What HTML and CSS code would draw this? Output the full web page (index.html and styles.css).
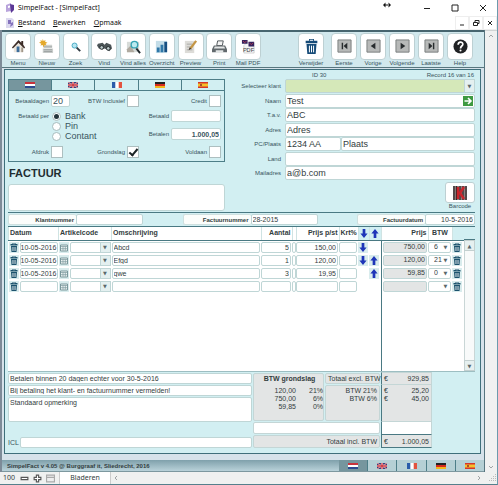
FILE: index.html
```html
<!DOCTYPE html>
<html lang="nl">
<head>
    <meta charset="UTF-8">
    <meta name="viewport" content="width=device-width, initial-scale=1.0">
    <title>SimpelFact - [SimpelFact]</title>
    <link rel="stylesheet" href="styles.css">
</head>
<body>
    <!-- Shared icons -->
    <svg class="sprite" aria-hidden="true">
        <symbol id="nl" viewBox="0 0 10 6"><path fill="#fff" d="M0 0h10v6H0z"/><path fill="#c8323c" d="M0 0h10v2H0z"/><path fill="#2c4a90" d="M0 4h10v2H0z"/></symbol>
        <symbol id="gb" viewBox="0 0 10 6"><path fill="#34447f" d="M0 0h10v6H0z"/><path stroke="#fff" stroke-width="1" d="M0 0l10 6M10 0L0 6"/><path stroke="#c8323c" stroke-width=".6" d="M0 0l10 6M10 0L0 6"/><path stroke="#fff" stroke-width="2" d="M5 0v6M0 3h10"/><path stroke="#c8323c" stroke-width="1.3" d="M5 0v6M0 3h10"/></symbol>
        <symbol id="fr" viewBox="0 0 10 6"><path fill="#fff" d="M0 0h10v6H0z"/><path fill="#2a5caa" d="M0 0h3.3v6H0z"/><path fill="#e2533f" d="M6.7 0H10v6H6.7z"/></symbol>
        <symbol id="de" viewBox="0 0 10 6"><path fill="#222" d="M0 0h10v2H0z"/><path fill="#d62a1e" d="M0 2h10v2H0z"/><path fill="#f2b51c" d="M0 4h10v2H0z"/></symbol>
        <symbol id="es" viewBox="0 0 10 6"><path fill="#d5352a" d="M0 0h10v6H0z"/><path fill="#f5c02a" d="M0 1.5h10v3H0z"/><path fill="#a8502a" d="M2 2h2v2H2z"/></symbol>
        <symbol id="trash" viewBox="0 0 16 18"><path fill="currentColor" d="M5 0h6v2h4v3H1V2h4zM2 6h12l-1 12H3z"/><path stroke="#fff" stroke-width="1.2" d="M5.500 8v8M8 8v8M10.500 8v8M6 1.500h4"/></symbol>
        <symbol id="cal" viewBox="0 0 8 8"><path fill="#eef4f4" stroke="#7b989c" d="M.5 1.500h7v6h-7z"/><path stroke="#7b989c" stroke-width=".7" d="M0 3h8M3 3v4M5.300 3v4M1 5.200h6"/></symbol>
        <symbol id="down" viewBox="0 0 8 10"><path fill="#1f35b8" d="M2.500 0h3v5H8L4 10 0 5h2.500z"/></symbol>
        <symbol id="up" viewBox="0 0 8 10"><path fill="#1f35b8" d="M2.500 10h3V5H8L4 0 0 5h2.500z"/></symbol>
    </svg>

    <div class="window">
        <header class="titlebar">
            <svg class="app-icon" viewBox="0 0 10 10"><path fill="#b9a4dc" d="M1 2l5-2v8L1 9z"/><path fill="#5b3796" d="M5 1l4 1v5l-3 3z"/><path fill="#fff" d="M3 3l2-.5v2L3 5z"/></svg>
            <span class="title">SimpelFact - [SimpelFact]</span>
            <svg class="resize" viewBox="0 0 8 6"><path fill="#111" d="M0 3l2.500-2.500v5zM8 3L5.500.5v5zM2 2.500h4v1H2z"/></svg>
            <div class="window-buttons">
                <button aria-label="Minimaliseren"><svg viewBox="0 0 8 8"><path d="M1 4.500h6"/></svg></button>
                <button aria-label="Maximaliseren"><svg viewBox="0 0 8 8"><path d="M1 1h6v6H1z"/></svg></button>
                <button aria-label="Sluiten"><svg viewBox="0 0 8 8"><path d="M1 1l6 6M7 1L1 7"/></svg></button>
            </div>
        </header>

        <nav class="menubar">
            <svg class="app-icon" viewBox="0 0 10 10"><path fill="#dcd9ef" d="M1 0h6l2 2v8H1z"/><path fill="#8573bd" d="M3 2h3v4H3zM6 5l2-1v3L5 9z"/></svg>
            <a href="#"><u>B</u>estand</a>
            <a href="#"><u>B</u>ewerken</a>
            <a href="#"><u>O</u>pmaak</a>
            <div class="doc-buttons">
                <button aria-label="Venster minimaliseren"><svg viewBox="0 0 8 8"><path d="M2 6h4"/></svg></button>
                <button aria-label="Venster herstellen"><svg viewBox="0 0 8 8"><path d="M1.500 3.500h4v3h-4zM3 3V1.500h4v3H6"/></svg></button>
                <button aria-label="Venster sluiten"><svg viewBox="0 0 8 8"><path d="M2 2l4 4M6 2L2 6"/></svg></button>
            </div>
        </nav>

        <div class="workspace">
            <div class="content">
                <div class="toolbar">
                    <div class="tools tools-left">
                        <button class="tool"><span class="tile"><svg viewBox="0 0 16 16"><path fill="#e9e4dc" d="M3 8l5-5 5 5v6H3z"/><path fill="#3b2b26" d="M1 9l7-8 3 3V2h2v4l2 3-1 1-6-6-6 6z"/><path fill="#3c6d9b" d="M6 8h3v6H6z"/><path fill="#a19688" d="M11 9h2v5h-2z"/></svg></span>Menu</button>
                        <button class="tool"><span class="tile"><svg viewBox="0 0 16 16"><path fill="#cdd1cf" d="M5 6h9v3H5zM4 10h11v5H4z"/><path stroke="#949b9b" d="M5 8.500h9M5 11.500h9M5 13.500h9"/><path fill="#e4a92c" d="M4 0l1 2 2-1-.5 2L9 4 7 5l1 2-2-.5L4.500 9 4 6.500 1.500 7l1-2L0 4l2-1-.5-2L3.500 2z"/></svg></span>Nieuw</button>
                        <button class="tool"><span class="tile"><svg viewBox="0 0 16 16"><path stroke="#303b42" stroke-width="2" d="M9 9l4 4"/><circle cx="7" cy="7" r="2.700" fill="#b6e6f2" stroke="#45a8c2"/></svg></span>Zoek</button>
                        <button class="tool"><span class="tile"><svg viewBox="0 0 16 16"><path fill="#4c5558" d="M1 5l5-1 2 2 2-2 5 2 1 4-3 3-3-2-2-1-2 1-4-1-2-3z"/><circle cx="5" cy="9" r="2" fill="#bac8c9" stroke="#20282a"/><circle cx="12" cy="10" r="2" fill="#bac8c9" stroke="#20282a"/></svg></span>Vind</button>
                        <button class="tool"><span class="tile"><svg viewBox="0 0 16 16"><path fill="#d7dbd8" d="M1 3h13v11H1z"/><path fill="#b0aaa0" d="M1 11l4-4 4 7H1z"/><path stroke="#20282c" stroke-width="2" d="M11 10l4 5"/><circle cx="9" cy="6" r="3.500" fill="#bceaf0" stroke="#36a3b4" stroke-width="1.500"/></svg></span>Vind alles</button>
                        <button class="tool"><span class="tile"><svg viewBox="0 0 16 16"><path fill="#c4dde8" d="M2 2h12v13H2z"/><path fill="#2f77a8" d="M3 9h3v5H3zM7 6h3v8H7z"/><path fill="#164e81" d="M11 3h3v11h-3z"/></svg></span>Overzicht</button>
                        <button class="tool"><span class="tile"><svg viewBox="0 0 16 16"><path fill="#dddcd8" d="M2 2h10v13H2z"/><path stroke="#a8a8a4" d="M4 5.500h6M4 8.500h6M4 11.500h6"/><path stroke="#c49645" stroke-width="2.500" d="M14 2l-6 8"/><path fill="#3f352b" d="M7 9l2 1-3 2z"/></svg></span>Preview</button>
                        <button class="tool"><span class="tile"><svg viewBox="0 0 16 16"><path fill="#f4f4f4" stroke="#4c5256" d="M5 7l1-5h6l-1 5z"/><path fill="#62696d" d="M2 7h12l2 4v3H0v-3z"/><path fill="#e3e6e6" d="M3 8h10l1 2H2zM4 12h8v3H4z"/></svg></span>Print</button>
                        <button class="tool"><span class="tile"><svg viewBox="0 0 16 16"><path fill="#f3f3f3" stroke="#b8b8b8" stroke-width=".6" d="M6 4h8v11H3V7z"/><path fill="#33235d" d="M1 1h6v4H1zM8 3h6v5H8z"/><path fill="none" stroke="#b13a54" d="M2 2l2 2 2-2M9 4l2 2 2-2"/><text x="2" y="14" class="pdf">PDF</text></svg></span>Mail PDF</button>
                    </div>
                    <div class="tools tools-right">
                        <button class="tool tool-delete"><span class="tile"><svg viewBox="0 0 16 18"><path fill="#164b78" d="M5 0h6v2h4v3H1V2h4zM2 6h12l-1 12H3z"/><path stroke="#fff" stroke-width="1.200" d="M5.500 8v8M8 8v8M10.500 8v8M6 1.500h4"/></svg></span>Verwijder</button>
                        <button class="tool"><span class="tile"><svg viewBox="0 0 16 16"><path fill="#b7b9b8" stroke="#777c7c" d="M1 1h14v13H1z"/><path fill="#282c2e" d="M5 4h1.500v7H5zM11 4v7L7 7.500z"/></svg></span>Eerste</button>
                        <button class="tool"><span class="tile"><svg viewBox="0 0 16 16"><path fill="#b7b9b8" stroke="#777c7c" d="M1 1h14v13H1z"/><path fill="#282c2e" d="M10 4v7L5 7.500z"/></svg></span>Vorige</button>
                        <button class="tool"><span class="tile"><svg viewBox="0 0 16 16"><path fill="#b7b9b8" stroke="#777c7c" d="M1 1h14v13H1z"/><path fill="#282c2e" d="M6 4v7l5-3.500z"/></svg></span>Volgende</button>
                        <button class="tool"><span class="tile"><svg viewBox="0 0 16 16"><path fill="#b7b9b8" stroke="#777c7c" d="M1 1h14v13H1z"/><path fill="#282c2e" d="M5 4v7l4-3.500zM9.500 4H11v7H9.500z"/></svg></span>Laatste</button>
                        <button class="tool"><span class="tile"><svg viewBox="0 0 16 16"><circle cx="8" cy="8" r="7.500" fill="#202224"/><path fill="none" stroke="#fff" stroke-width="1.800" d="M5.500 6c0-3.500 5-3.500 5-.5C10.500 7.500 8 7.500 8 10"/><circle cx="8" cy="12.300" r="1.100" fill="#fff"/></svg></span>Help</button>
                    </div>
                </div>

                <main class="invoice">
                    <div class="top">
                        <section class="top-left">
                            <div class="payment">
                                <div class="langs">
                                    <button class="active" aria-label="Nederlands"><svg><use href="#nl"/></svg></button>
                                    <button aria-label="Engels"><svg><use href="#gb"/></svg></button>
                                    <button aria-label="Frans"><svg><use href="#fr"/></svg></button>
                                    <button aria-label="Duits"><svg><use href="#de"/></svg></button>
                                    <button aria-label="Spaans"><svg><use href="#es"/></svg></button>
                                </div>
                                <div class="pay-grid">
                                    <label for="dagen">Betaaldagen</label>
                                    <input id="dagen" class="field days" value="20">
                                    <label for="incl">BTW Inclusief</label>
                                    <input id="incl" type="checkbox">
                                    <label for="credit">Credit</label>
                                    <input id="credit" class="last" type="checkbox">
                                </div>
                                <div class="pay-middle">
                                    <span class="pay-label" id="per">Betaald per</span>
                                    <div class="radios" role="radiogroup" aria-labelledby="per">
                                        <label><input type="radio" name="per" checked>Bank</label>
                                        <label><input type="radio" name="per">Pin</label>
                                        <label><input type="radio" name="per">Contant</label>
                                    </div>
                                    <div class="amounts">
                                        <label for="betaald">Betaald</label>
                                        <input id="betaald" class="field amount">
                                        <label for="betalen">Betalen</label>
                                        <input id="betalen" class="field amount" value="1.000,05">
                                    </div>
                                </div>
                                <div class="pay-grid">
                                    <label for="afdruk">Afdruk</label>
                                    <input id="afdruk" type="checkbox">
                                    <label for="grondslag">Grondslag</label>
                                    <input id="grondslag" type="checkbox" checked>
                                    <label for="voldaan">Voldaan</label>
                                    <input id="voldaan" class="last" type="checkbox">
                                </div>
                            </div>
                            <h1>FACTUUR</h1>
                            <textarea class="field note" aria-label="Factuurtekst"></textarea>
                        </section>

                        <section class="customer">
                            <div class="record"><span>ID 30</span><span>Record 16 van 16</span></div>
                            <div class="customer-grid">
                                <label for="klant">Selecteer klant</label>
                                <div class="drop drop-green"><select id="klant" class="field"><option></option></select></div>
                                <label for="naam">Naam</label>
                                <div class="name">
                                    <input id="naam" class="field" value="Test">
                                    <button class="go" aria-label="Ga naar klant"><svg viewBox="0 0 10 10"><path fill="none" stroke="#fff" stroke-width="1.600" d="M1.500 5H8M5 2l3 3-3 3"/></svg></button>
                                </div>
                                <label for="tav">T.a.v.</label>
                                <input id="tav" class="field" value="ABC">
                                <label for="adres">Adres</label>
                                <input id="adres" class="field" value="Adres">
                                <label for="pc">PC/Plaats</label>
                                <div class="city">
                                    <input id="pc" class="field" value="1234 AA">
                                    <input class="field" aria-label="Plaats" value="Plaats">
                                </div>
                                <label for="land">Land</label>
                                <input id="land" class="field">
                                <label for="mail">Mailadres</label>
                                <input id="mail" class="field" value="a@b.com">
                            </div>
                            <button class="barcode"><span><svg viewBox="0 0 14 14"><path fill="#8d8583" d="M0 0h14v14H0z"/><path stroke="#2c2426" stroke-width="1.200" d="M1 0v14M3.500 0v14M7 0v14M10 0v14M13 0v14"/><path fill="none" stroke="#c9252c" stroke-width="2.500" d="M5 1v12M11 1L7 7l4 6"/></svg></span>Barcode</button>
                        </section>
                    </div>

                    <div class="numbers">
                        <div class="number"><label for="klantnr">Klantnummer</label><input id="klantnr" class="field"></div>
                        <div class="number"><label for="factuurnr">Factuurnummer</label><input id="factuurnr" class="field" value="28-2015"></div>
                        <div class="number number-date"><label for="datum">Factuurdatum</label><input id="datum" class="field right" value="10-5-2016"></div>
                    </div>

                    <div class="lines">
                        <div class="lines-main">
                            <table>
                                <colgroup>
                                    <col class="w11"><col class="w39"><col class="w11"><col class="w42"><col>
                                    <col class="w31"><col class="w4"><col class="w43"><col class="w19"><col class="w11"><col class="w12">
                                    <col class="w47"><col class="w24"><col class="w12">
                                </colgroup>
                                <thead>
                                    <tr>
                                        <th colspan="2">Datum</th><th colspan="2">Artikelcode</th><th>Omschrijving</th>
                                        <th class="right">Aantal</th><th></th><th class="right">Prijs p/st</th><th class="right">Krt%</th>
                                        <th class="sort"><svg><use href="#down"/></svg></th><th class="sort"><svg><use href="#up"/></svg></th>
                                        <th class="right">Prijs</th><th class="center">BTW</th><th class="blank"></th>
                                    </tr>
                                </thead>
                                <tbody>
                                    <tr>
                                        <td><button class="icon" aria-label="Verwijder regel"><svg><use href="#trash"/></svg></button></td>
                                        <td><input class="field date" aria-label="Datum" value="10-05-2016"></td>
                                        <td><button class="icon" aria-label="Kalender"><svg><use href="#cal"/></svg></button></td>
                                        <td><div class="drop"><select class="field" aria-label="Artikelcode"><option></option></select></div></td>
                                        <td><input class="field" aria-label="Omschrijving" value="Abcd"></td>
                                        <td><input class="field right" aria-label="Aantal" value="5"></td>
                                        <td><span class="field"></span></td>
                                        <td><input class="field right" aria-label="Prijs per stuk" value="150,00"></td>
                                        <td><input class="field" aria-label="Korting"></td>
                                        <td><button class="icon" aria-label="Omlaag"><svg><use href="#down"/></svg></button></td>
                                        <td></td>
                                        <td class="price"><output class="field right">750,00</output></td>
                                        <td><div class="drop drop-btw"><select class="field" aria-label="BTW"><option>6</option></select></div></td>
                                        <td><button class="icon" aria-label="Verwijder regel"><svg><use href="#trash"/></svg></button></td>
                                    </tr>
                                    <tr>
                                        <td><button class="icon" aria-label="Verwijder regel"><svg><use href="#trash"/></svg></button></td>
                                        <td><input class="field date" aria-label="Datum" value="10-05-2016"></td>
                                        <td><button class="icon" aria-label="Kalender"><svg><use href="#cal"/></svg></button></td>
                                        <td><div class="drop"><select class="field" aria-label="Artikelcode"><option></option></select></div></td>
                                        <td><input class="field" aria-label="Omschrijving" value="Efgd"></td>
                                        <td><input class="field right" aria-label="Aantal" value="1"></td>
                                        <td><span class="field"></span></td>
                                        <td><input class="field right" aria-label="Prijs per stuk" value="120,00"></td>
                                        <td><input class="field" aria-label="Korting"></td>
                                        <td><button class="icon" aria-label="Omlaag"><svg><use href="#down"/></svg></button></td>
                                        <td><button class="icon" aria-label="Omhoog"><svg><use href="#up"/></svg></button></td>
                                        <td class="price"><output class="field right">120,00</output></td>
                                        <td><div class="drop drop-btw"><select class="field" aria-label="BTW"><option>21</option></select></div></td>
                                        <td><button class="icon" aria-label="Verwijder regel"><svg><use href="#trash"/></svg></button></td>
                                    </tr>
                                    <tr>
                                        <td><button class="icon" aria-label="Verwijder regel"><svg><use href="#trash"/></svg></button></td>
                                        <td><input class="field date" aria-label="Datum" value="10-05-2016"></td>
                                        <td><button class="icon" aria-label="Kalender"><svg><use href="#cal"/></svg></button></td>
                                        <td><div class="drop"><select class="field" aria-label="Artikelcode"><option></option></select></div></td>
                                        <td><input class="field" aria-label="Omschrijving" value="qwe"></td>
                                        <td><input class="field right" aria-label="Aantal" value="3"></td>
                                        <td><span class="field"></span></td>
                                        <td><input class="field right" aria-label="Prijs per stuk" value="19,95"></td>
                                        <td><input class="field" aria-label="Korting"></td>
                                        <td></td>
                                        <td><button class="icon" aria-label="Omhoog"><svg><use href="#up"/></svg></button></td>
                                        <td class="price"><output class="field right">59,85</output></td>
                                        <td><div class="drop drop-btw"><select class="field" aria-label="BTW"><option>0</option></select></div></td>
                                        <td><button class="icon" aria-label="Verwijder regel"><svg><use href="#trash"/></svg></button></td>
                                    </tr>
                                    <tr>
                                        <td><button class="icon" aria-label="Verwijder regel"><svg><use href="#trash"/></svg></button></td>
                                        <td><input class="field date" aria-label="Datum"></td>
                                        <td><button class="icon" aria-label="Kalender"><svg><use href="#cal"/></svg></button></td>
                                        <td><div class="drop"><select class="field" aria-label="Artikelcode"><option></option></select></div></td>
                                        <td><input class="field" aria-label="Omschrijving"></td>
                                        <td><input class="field" aria-label="Aantal"></td>
                                        <td><span class="field"></span></td>
                                        <td><input class="field" aria-label="Prijs per stuk"></td>
                                        <td><input class="field" aria-label="Korting"></td>
                                        <td></td>
                                        <td></td>
                                        <td class="price"><output class="field"></output></td>
                                        <td><div class="drop drop-btw"><select class="field" aria-label="BTW"><option></option></select></div></td>
                                        <td><button class="icon" aria-label="Verwijder regel"><svg><use href="#trash"/></svg></button></td>
                                    </tr>
                                </tbody>
                            </table>
                            <div class="lines-rest"><div></div></div>
                        </div>
                        <div class="scroll">
                            <div class="scroll-head"></div>
                            <button aria-label="Omhoog schuiven">▲</button>
                            <div class="track"></div>
                            <button aria-label="Omlaag schuiven">▼</button>
                        </div>
                    </div>

                    <div class="bottom">
                        <div class="notes">
                            <input class="field" aria-label="Betalingstermijn" value="Betalen binnen 20 dagen echter voor 30-5-2016">
                            <input class="field" aria-label="Betalingstekst" value="Bij betaling het klant- en factuurnummer vermelden!">
                            <textarea class="field" aria-label="Opmerking">Standaard opmerking</textarea>
                            <div class="icl"><label for="icl">ICL</label><input id="icl" class="field"></div>
                        </div>
                        <div class="totals">
                            <div class="base">
                                <strong>BTW grondslag</strong>
                                <span>120,00</span><span>21%</span>
                                <span>750,00</span><span>6%</span>
                                <span>59,85</span><span>0%</span>
                            </div>
                            <div class="gray">Totaal excl. BTW</div>
                            <div class="gray money"><span>€</span><span>929,85</span></div>
                            <div class="gray vat">BTW 21%<br>BTW 6%</div>
                            <div class="gray money vat"><span>€<br>€</span><span>25,20<br>45,00</span></div>
                            <div class="gray white wide"></div>
                            <div class="gray white money"></div>
                            <div class="gray wide total">Totaal incl. BTW</div>
                            <div class="gray money total-sum"><span>€</span><span>1.000,05</span></div>
                        </div>
                    </div>
                </main>

                <footer class="footer">
                    <strong>SimpelFact v 4.05 @ Burggraaf it, Sliedrecht, 2016</strong>
                    <div class="langs">
                        <button class="active" aria-label="Nederlands"><svg><use href="#nl"/></svg></button>
                        <button aria-label="Engels"><svg><use href="#gb"/></svg></button>
                        <button aria-label="Frans"><svg><use href="#fr"/></svg></button>
                        <button aria-label="Duits"><svg><use href="#de"/></svg></button>
                        <button aria-label="Spaans"><svg><use href="#es"/></svg></button>
                    </div>
                </footer>
            </div>
            <div class="side-scroll">
                <svg viewBox="0 0 8 8"><path d="M2 5l2-2 2 2"/></svg>
                <svg viewBox="0 0 8 8"><path d="M2 3l2 2 2-2"/></svg>
            </div>
        </div>

        <div class="statusbar">
            <span class="zoom">100</span>
            <button aria-label="Uitzoomen"><svg viewBox="0 0 8 8"><path fill="#fff" stroke="#555" d="M1 3h6v2H1z"/></svg></button>
            <button aria-label="Inzoomen"><svg viewBox="0 0 8 8"><path fill="#fff" stroke="#555" d="M3 1h2v2h2v2H5v2H3V5H1V3h2z"/></svg></button>
            <button aria-label="Statusbalk"><svg viewBox="0 0 8 8"><path fill="#eee" stroke="#aaa" d="M.5 1h7v6h-7zM.5 3h7"/></svg></button>
            <span class="mode">Bladeren</span>
            <svg class="chevron" viewBox="0 0 8 8"><path d="M5 2L3 4l2 2"/></svg>
            <svg class="chevron chevron-right" viewBox="0 0 8 8"><path d="M3 2l2 2-2 2"/></svg>
            <svg class="grip" viewBox="0 0 8 8"><path fill="#bbb" d="M6 0h1v1H6zM4 2h1v1H4zM6 2h1v1H6zM2 4h1v1H2zM4 4h1v1H4zM6 4h1v1H6zM0 6h1v1H0zM2 6h1v1H2zM4 6h1v1H4zM6 6h1v1H6z"/></svg>
        </div>
    </div>
</body>
</html>
```
FILE: styles.css
```css
*, *::after {
    box-sizing: border-box;
}
body {
    margin: 0;
    font-family: "Liberation Sans", Arial, sans-serif;
    font-size: 7px;
    line-height: 8px;
    color: #333d40;
    background-color: #fff;
}
button, input, select, textarea {
    font: inherit;
    color: inherit;
    margin: 0;
    padding: 0;
    border: none;
    background: none;
    min-width: 0;
}
svg {
    display: block;
}
.sprite {
    position: absolute;
    width: 0;
    height: 0;
}
.window {
    display: flex;
    flex-direction: column;
    min-height: 100vh;
    border-right: 1px solid #6c9aad;
    border-bottom: 1px solid #55808c;
}

/* Title and menu */
.titlebar, .menubar {
    display: flex;
    align-items: center;
    height: 15px;
    padding-left: 5px;
    font-family: "Noto Sans", "Open Sans", sans-serif;
    font-size: 7px;
    color: #111;
}
.app-icon {
    width: 10px;
    height: 10px;
    margin-right: 3px;
}
.resize {
    width: 8px;
    height: 6px;
    margin-left: auto;
    margin-bottom: 5px;
}
.window-buttons {
    display: flex;
    gap: 20px;
    margin-left: 32px;
    padding-right: 10px;
}
.window-buttons svg, .doc-buttons svg {
    width: 8px;
    height: 8px;
    fill: none;
    stroke: #222;
    stroke-width: 1;
}
.menubar a {
    color: #111;
    text-decoration: none;
    margin-right: 8px;
}
.doc-buttons {
    display: flex;
    margin-left: auto;
}
.doc-buttons button {
    padding: 2px;
    border: 1px solid #eee;
}

/* Workspace */
.workspace {
    display: flex;
    flex: 1;
}
.content {
    display: flex;
    flex-direction: column;
    flex: 1;
    border-left: 2px solid #7d8b98;
    border-right: 1px solid #56757f;
    background-color: #d6e2ea;
}
.side-scroll {
    display: flex;
    flex-direction: column;
    justify-content: space-between;
    align-items: center;
    width: 12px;
    background-color: #f0f1f1;
    border-top: 1px solid #d0d4d4;
}
.side-scroll svg, .chevron {
    width: 8px;
    height: 8px;
    margin: 1px;
    fill: none;
    stroke: #a0a4a6;
}
.toolbar {
    display: flex;
    justify-content: space-between;
    height: 38px;
    padding: 1px 11px 0 3px;
    border-top: 2px solid #47656f;
    border-bottom: 1px solid #58767f;
    background-color: #d1e8ed;
}
.tools {
    display: flex;
    justify-content: space-between;
}
.tools-left {
    width: 256px;
}
.tools-right {
    width: 175px;
}
.tool {
    display: flex;
    flex-direction: column;
    align-items: center;
    width: 26px;
    font-size: 6px;
    line-height: 7px;
    white-space: nowrap;
    color: #38545d;
}
.tool-delete {
    margin-right: 4px;
}
.tile {
    display: flex;
    align-items: center;
    justify-content: center;
    width: 26px;
    height: 27px;
    border: 1px solid #bdd0d3;
    border-radius: 4px;
    background-color: #fff;
}
.tile svg {
    width: 15px;
    height: 15px;
}
.pdf {
    font-size: 6px;
    fill: #444;
}
.invoice {
    display: flex;
    flex-direction: column;
    flex: 1;
    margin: 1px 3px 6px 2px;
    padding: 0 5px 5px 3px;
    border: 1px solid #3f6f7b;
    background-color: #d2eff2;
}

/* Fields */
.field {
    display: block;
    width: 100%;
    height: 11px;
    padding: 0 1px;
    border: 1px solid #bfd6d6;
    border-radius: 2px;
    background-color: #fff;
}
textarea.field {
    resize: none;
    overflow: hidden;
}
.right {
    text-align: right;
}
.center {
    text-align: center;
}
input[type="checkbox"] {
    appearance: none;
    width: 12px;
    height: 12px;
    border: 1px solid #adbfc0;
    background-color: #fff;
}
input[type="checkbox"]:checked::after {
    content: "";
    display: block;
    width: 5px;
    height: 9px;
    margin-left: 3px;
    border: solid #1b2426;
    border-width: 0 2px 2px 0;
    transform: rotate(40deg);
}
input[type="radio"] {
    appearance: none;
    width: 9px;
    height: 9px;
    border: 1px solid #a6bcbe;
    border-radius: 50%;
    background-color: #fff;
}
input[type="radio"]:checked {
    border: 2px solid #fff;
    outline: 1px solid #a6bcbe;
    outline-offset: -1px;
    background-color: #26363c;
}
.drop {
    position: relative;
}
.drop select {
    appearance: none;
}
.drop::after {
    content: "▼";
    position: absolute;
    top: 0;
    right: 0;
    width: 11px;
    height: 100%;
    display: flex;
    align-items: center;
    justify-content: center;
    border: 1px solid #bfd6d6;
    background-color: #e4f0f0;
    font-family: "DejaVu Sans", sans-serif;
    font-size: 5px;
    color: #5a686b;
    pointer-events: none;
}

/* Upper half */
.top {
    display: flex;
    justify-content: space-between;
}
.top-left {
    width: 217px;
    padding-top: 9px;
}
.payment {
    border: 1px solid #4d7e88;
    font-size: 6px;
    color: #38545d;
}
.langs {
    display: flex;
}
.langs button {
    display: flex;
    flex: 1;
    align-items: center;
    justify-content: center;
    height: 10px;
    border-right: 1px solid #4d7e88;
}
.langs button:last-child {
    border-right: none;
}
.langs .active {
    background-color: #76969e;
}
.langs svg {
    width: 10px;
    height: 6px;
}
.payment .langs {
    border-bottom: 1px solid #4d7e88;
}
.pay-grid {
    display: grid;
    grid-template-columns: 40px 19px 53px 12px 1fr 12px;
    column-gap: 2px;
    align-items: center;
    padding: 4px 3px 3px 0;
    text-align: right;
}
.pay-grid .days {
    height: 12px;
    font-size: 9px;
}
.pay-middle {
    display: flex;
    height: 32px;
    padding-right: 3px;
}
.pay-label {
    width: 40px;
    padding-top: 2px;
    text-align: right;
}
.radios {
    display: flex;
    flex-direction: column;
    margin-left: 3px;
    padding-top: 1px;
    font-size: 9px;
    line-height: 10px;
}
.radios label {
    display: flex;
    align-items: center;
    gap: 4px;
    height: 10px;
}
.amounts {
    display: grid;
    grid-template-columns: auto 50px;
    gap: 6px 2px;
    align-content: start;
    align-items: center;
    margin-left: auto;
    text-align: right;
}
.amount {
    height: 12px;
    text-align: right;
    font-size: 7px;
    font-weight: bold;
}
h1 {
    margin: 5px 0 5px 1px;
    font-size: 11px;
    line-height: 12px;
    color: #1f2d31;
}
.top .note {
    height: 27px;
    border-radius: 3px;
}
.customer {
    display: flex;
    flex-direction: column;
    width: 236px;
    font-size: 6px;
    color: #38545d;
}
.record {
    display: flex;
    justify-content: space-between;
    padding: 1px 1px 0 73px;
}
.customer-grid {
    display: grid;
    grid-template-columns: 42px 1fr;
    column-gap: 4px;
    align-content: space-between;
    align-items: center;
    height: 101px;
    text-align: right;
    white-space: nowrap;
}
.customer-grid .field {
    height: 14px;
    font-size: 9px;
    color: #333d40;
}
.customer-grid .drop-green .field {
    background-color: #d5e8b9;
}
.customer-grid .name {
    position: relative;
}
.go {
    position: absolute;
    top: 2px;
    right: 2px;
    width: 10px;
    height: 10px;
    background-color: #3e9a41;
}
.city {
    display: grid;
    grid-template-columns: 56px 1fr;
}
.barcode {
    display: flex;
    flex-direction: column;
    align-items: center;
    align-self: flex-end;
    margin-top: 2px;
    line-height: 7px;
}
.barcode span {
    display: flex;
    align-items: center;
    justify-content: center;
    width: 30px;
    height: 21px;
    border: 1px solid #bdd0d3;
    border-radius: 3px;
    background-color: #fff;
}
.barcode svg {
    width: 14px;
    height: 14px;
}

/* Customer and invoice numbers */
.numbers {
    display: flex;
    justify-content: space-between;
    margin-top: 1px;
    padding: 1px 0;
    border-top: 1px solid #4a7983;
    border-bottom: 1px solid #4a7983;
}
.number {
    display: grid;
    grid-template-columns: 68px 67px;
}
.number-date {
    grid-template-columns: 68px 50px;
}
.number label {
    padding: 1px 2px 0 0;
    border: 1px solid #cfe0df;
    border-right: none;
    border-radius: 2px;
    background-color: #fbfdfb;
    text-align: right;
    font-size: 6px;
    font-weight: bold;
}

/* Invoice lines */
.lines {
    display: flex;
    flex: 1;
}
.lines-main {
    display: flex;
    flex-direction: column;
    flex: 1;
}
table {
    width: 100%;
    table-layout: fixed;
    border-collapse: collapse;
    background-color: #fff;
}
.w4 { width: 4px; }
.w11 { width: 11px; }
.w12 { width: 12px; }
.w19 { width: 19px; }
.w24 { width: 24px; }
.w31 { width: 31px; }
.w39 { width: 39px; }
.w42 { width: 42px; }
.w43 { width: 43px; }
.w47 { width: 47px; }
th {
    height: 13px;
    padding: 0 1px;
    border-bottom: 1px solid #4a7983;
    border-left: 1px solid #cfe3e3;
    text-align: left;
    white-space: nowrap;
}
th.right {
    text-align: right;
}
th.center {
    text-align: center;
}
th.blank, th.sort {
    background-color: #d2eff2;
}
.sort svg {
    width: 8px;
    height: 9px;
}
td {
    height: 13px;
    padding: 1px 1px 1px 0;
}
.date {
    padding: 0;
}
td.price {
    padding-left: 1px;
    border-left: 1px solid #4a7983;
}
td.price .field {
    background-color: #e3e5e5;
}
.drop-btw::after {
    border: none;
    background: none;
}
.drop-btw .field {
    padding-left: 5px;
}
.icon {
    display: flex;
    align-items: center;
    justify-content: center;
    width: 10px;
    height: 11px;
    background-color: #d9eced;
    color: #1c526d;
}
.icon svg {
    width: 8px;
    height: 9px;
}
.lines-rest {
    display: flex;
    flex: 1;
    justify-content: flex-end;
    background-color: #fff;
}
.lines-rest div {
    width: 83px;
    border-left: 1px solid #4a7983;
}
.scroll {
    display: flex;
    flex-direction: column;
    width: 11px;
}
.scroll-head {
    height: 13px;
    border-bottom: 1px solid #4a7983;
}
.scroll button {
    height: 11px;
    border: 1px solid #c3d0d0;
    background-color: #e6f0f0;
    font-family: "DejaVu Sans", sans-serif;
    font-size: 5px;
    color: #5a686b;
}
.track {
    flex: 1;
    border: solid #c9d6d6;
    border-width: 0 1px;
    background-color: #f8fafa;
}

/* Notes and totals */
.bottom {
    display: flex;
    padding-right: 43px;
    border-top: 1px solid #9dbec2;
}
.notes {
    display: flex;
    flex-direction: column;
    flex: 1;
    gap: 1px;
    padding-top: 1px;
}
.notes textarea {
    height: 25px;
    padding-top: 1px;
}
.icl {
    display: flex;
    align-items: center;
    gap: 1px;
    margin-top: auto;
    color: #38545d;
}
.totals {
    display: grid;
    grid-template-columns: 72px 56px 51px;
    grid-template-rows: 12px 37px 13px 14px;
    padding-left: 1px;
}
.gray, .base {
    margin: 1px 1px 0 0;
    padding: 1px 2px;
    border: 1px solid #c4d6d6;
    border-radius: 2px;
    background-color: #e3e5e5;
    text-align: right;
    white-space: nowrap;
}
.base {
    grid-row: span 2;
    display: grid;
    grid-template-columns: 40px 1fr;
    align-content: start;
    padding-right: 0;
}
.base strong {
    grid-column: span 2;
    padding-bottom: 4px;
    text-align: center;
}
.wide {
    grid-column: span 2;
}
.money {
    display: flex;
    justify-content: space-between;
    margin: 0;
    padding-top: 2px;
    border-left: 1px solid #4a7983;
    border-bottom: none;
    border-radius: 0;
}
.white {
    background-color: #fff;
}
.total {
    padding-top: 2px;
}
.total-sum {
    padding-top: 3px;
    border-top: 1px solid #4a7983;
    border-bottom: 1px solid #4a7983;
}

/* Footer */
.footer {
    display: flex;
    align-items: center;
    justify-content: space-between;
    height: 12px;
    padding-left: 5px;
    border-bottom: 1px solid #7d989f;
    background: linear-gradient(#7fa0ab, #b9d2d9);
    font-size: 6px;
}
.footer .langs {
    width: 145px;
    background-color: #b5d0d5;
}
.footer .langs button {
    height: 11px;
}
.statusbar {
    display: flex;
    align-items: center;
    height: 12px;
    background-color: #f0f1f0;
    font-family: "Noto Sans", "Open Sans", sans-serif;
    font-size: 7px;
}
.zoom {
    padding: 0 3px;
}
.statusbar button {
    width: 13px;
    height: 12px;
    padding: 2px;
}
.mode {
    width: 52px;
    margin-left: 2px;
    border-left: 1px solid #ccc;
    border-right: 1px solid #ccc;
    background-color: #fff;
    line-height: 12px;
    text-align: center;
}
.chevron-right {
    margin-left: auto;
}
.grip {
    width: 8px;
    height: 8px;
    margin-left: 5px;
}
```
